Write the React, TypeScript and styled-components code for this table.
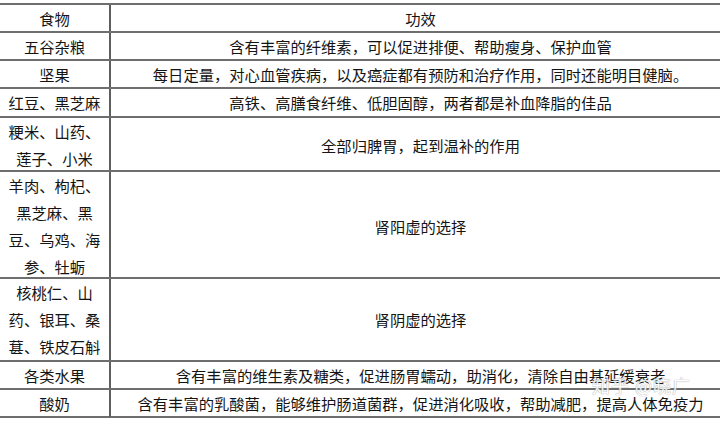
import React from 'react';
import styled, { createGlobalStyle } from 'styled-components';

const GlobalStyle = createGlobalStyle`
  html, body {
    margin: 0;
    padding: 0;
    background: #fff;
  }
  body {
    font-family: "Noto Sans CJK SC", "Noto Sans", sans-serif;
    color: #141414;
  }
`;

const Page = styled.div`
  position: relative;
  width: 720px;
  height: 422px;
  padding-top: 3px;
  box-sizing: border-box;
  overflow: hidden;
`;

const Table = styled.div`
  display: flex;
  flex-direction: column;
  border-bottom: 2px solid #6e6e6e;
`;

const Row = styled.div<{ $h: number }>`
  display: grid;
  grid-template-columns: 111px 1fr;
  height: ${({ $h }) => $h}px;
  border-top: 2px solid #6e6e6e;
  box-sizing: border-box;
`;

const FoodCell = styled.div`
  display: flex;
  flex-direction: column;
  align-items: center;
  justify-content: center;
  border-right: 2px solid #5e5e5e;
  font-size: 15.3px;
  line-height: 27px;
  text-align: center;
  white-space: nowrap;
`;

const EffectCell = styled.div`
  display: flex;
  align-items: center;
  justify-content: center;
  padding-left: 10px;
  font-size: 15.3px;
  line-height: 27px;
  white-space: nowrap;
`;

const Watermark = styled.div`
  position: absolute;
  left: 592px;
  top: 372px;
  font-size: 18px;
  color: #fff;
  letter-spacing: 1px;
  text-shadow: 0 0 1px #a0a0a0, 0 0 1px #a0a0a0;
  opacity: 0.85;
  pointer-events: none;
`;

type Item = { food: string[]; effect: string; h: number };

const rows: Item[] = [
  { food: ['五谷杂粮'], effect: '含有丰富的纤维素，可以促进排便、帮助瘦身、保护血管', h: 28 },
  { food: ['坚果'], effect: '每日定量，对心血管疾病，以及癌症都有预防和治疗作用，同时还能明目健脑。', h: 28 },
  { food: ['红豆、黑芝麻'], effect: '高铁、高膳食纤维、低胆固醇，两者都是补血降脂的佳品', h: 29 },
  { food: ['粳米、山药、', '莲子、小米'], effect: '全部归脾胃，起到温补的作用', h: 54 },
  { food: ['羊肉、枸杞、', '黑芝麻、黑', '豆、乌鸡、海', '参、牡蛎'], effect: '肾阳虚的选择', h: 107 },
  { food: ['核桃仁、山', '药、银耳、桑', '葚、铁皮石斛'], effect: '肾阴虚的选择', h: 83 },
  { food: ['各类水果'], effect: '含有丰富的维生素及糖类，促进肠胃蠕动，助消化，清除自由基延缓衰老', h: 28 },
  { food: ['酸奶'], effect: '含有丰富的乳酸菌，能够维护肠道菌群，促进消化吸收，帮助减肥，提高人体免疫力', h: 28 },
];

export default function App() {
  return (
    <Page>
      <GlobalStyle />
      <Table>
        <Row $h={28}>
          <FoodCell>食物</FoodCell>
          <EffectCell>功效</EffectCell>
        </Row>
        {rows.map((r) => (
          <Row key={r.food.join('')} $h={r.h}>
            <FoodCell>
              {r.food.map((line) => (
                <span key={line}>{line}</span>
              ))}
            </FoodCell>
            <EffectCell>{r.effect}</EffectCell>
          </Row>
        ))}
      </Table>
      <Watermark>知乎 @晓广</Watermark>
    </Page>
  );
}
